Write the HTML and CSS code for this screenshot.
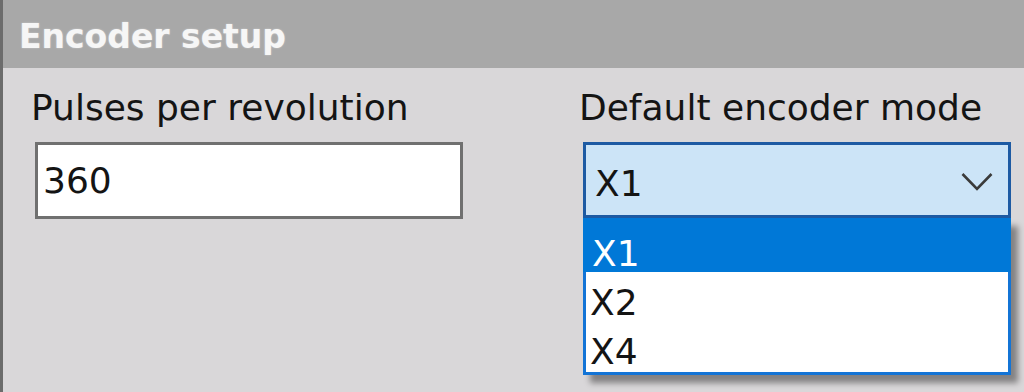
FILE: index.html
```html
<!DOCTYPE html>
<html>
<head>
<meta charset="utf-8">
<link rel="stylesheet" href="styles.css">
</head>
<body>
<div class="panel">
  <div class="header">Encoder setup</div>
  <div class="content">
    <div class="field field-left">
      <div class="label">Pulses per revolution</div>
      <div class="textbox">360</div>
    </div>
    <div class="field">
      <div class="label">Default encoder mode</div>
      <div class="combo-wrap">
        <div class="combo">
          <span class="combo-value">X1</span>
          <svg class="chevron" width="32" height="20" viewBox="0 0 32 20"><polyline points="1.5,2 16,17 30.5,2" fill="none" stroke="#3a3a3a" stroke-width="2.6"/></svg>
        </div>
        <ul class="dropdown">
          <li class="item selected">X1</li>
          <li class="item">X2</li>
          <li class="item">X4</li>
        </ul>
      </div>
    </div>
  </div>
</div>
</body>
</html>
```

FILE: styles.css
```css
html, body {
  margin: 0;
  padding: 0;
}
body {
  width: 1024px;
  height: 392px;
  overflow: hidden;
  font-family: "DejaVu Sans", "Liberation Sans", sans-serif;
}
.panel {
  box-sizing: border-box;
  height: 392px;
  border-left: 3px solid #6c6c6c;
  background: #d9d7d9;
}
.header {
  box-sizing: border-box;
  height: 68px;
  padding: 17px 0 0 16px;
  background: #a8a8a8;
  color: #f6f6f6;
  font-weight: bold;
  font-size: 33px;
  text-shadow: 0 0 2px rgba(255, 255, 255, 0.45);
}
.content {
  display: flex;
  padding: 19px 0 0 28px;
}
.field-left {
  width: 548px;
}
.label {
  font-size: 36px;
  line-height: 42px;
  color: #141414;
}
.textbox {
  box-sizing: border-box;
  display: flex;
  align-items: center;
  width: 428px;
  height: 77px;
  margin: 13px 0 0 4px;
  padding-left: 5px;
  border: 3px solid #707070;
  background: #ffffff;
  font-size: 36px;
  line-height: 42px;
  color: #141414;
}
.combo-wrap {
  position: relative;
  width: 428px;
  margin: 13px 0 0 4px;
}
.combo {
  box-sizing: border-box;
  display: flex;
  align-items: flex-start;
  justify-content: space-between;
  height: 76px;
  padding: 18px 15px 0 9px;
  border: 3px solid #1d5aa3;
  background: #cce4f7;
  font-size: 36px;
  line-height: 42px;
  color: #141414;
}
.chevron {
  margin-top: 9px;
}
.dropdown {
  position: absolute;
  top: 100%;
  left: 0;
  box-sizing: border-box;
  width: 428px;
  height: 157px;
  margin: 0;
  padding: 0;
  list-style: none;
  border: 3px solid #1374d6;
  border-top-color: #0078d7;
  background: #ffffff;
  box-shadow: 7px 8px 6px rgba(0, 0, 0, 0.4);
}
.item {
  padding: 12px 0 0 4px;
  line-height: 37px;
  font-size: 36px;
  color: #141414;
}
.item.selected {
  box-sizing: border-box;
  height: 54px;
  margin: -3px -3px 0 -3px;
  padding: 17px 3px 0 9px;
  background: #0078d7;
  color: #ffffff;
}
```
